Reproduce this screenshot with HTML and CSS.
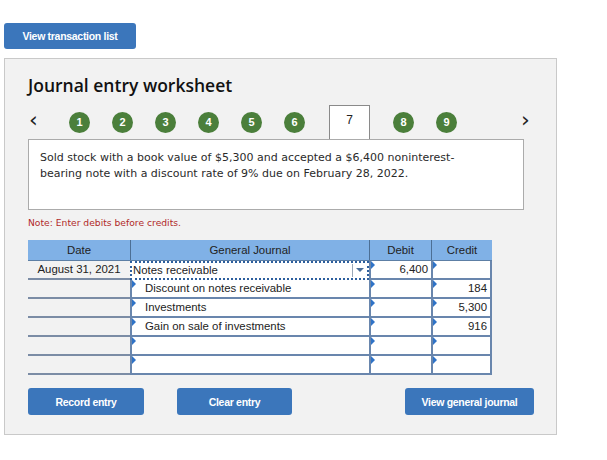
FILE: index.html
```html
<!DOCTYPE html>
<html lang="en">
<head>
    <meta charset="UTF-8">
    <title>Journal entry worksheet</title>
    <link rel="stylesheet" href="styles.css">
</head>
<body>
<div class="page">
    <button class="btn btn-top">View transaction list</button>

    <div class="panel">
        <h2 class="title">Journal entry worksheet</h2>

        <div class="nav">
            <span class="arrow">&lsaquo;</span>
            <span class="slot"><span class="dot">1</span></span>
            <span class="slot"><span class="dot">2</span></span>
            <span class="slot"><span class="dot">3</span></span>
            <span class="slot"><span class="dot">4</span></span>
            <span class="slot"><span class="dot">5</span></span>
            <span class="slot"><span class="dot">6</span></span>
            <span class="current">7</span>
            <span class="slot"><span class="dot">8</span></span>
            <span class="slot"><span class="dot">9</span></span>
            <span class="arrow arrow-right">&rsaquo;</span>
        </div>

        <div class="scenario">
            Sold stock with a book value of $5,300 and accepted a $6,400 noninterest-<br>
            bearing note with a discount rate of 9% due on February 28, 2022.
        </div>

        <p class="note">Note: Enter debits before credits.</p>

        <div class="journal">
            <div class="jrow head">
                <div class="hcell">Date</div>
                <div class="hcell">General Journal</div>
                <div class="hcell">Debit</div>
                <div class="hcell">Credit</div>
            </div>
            <div class="jrow">
                <div class="date">August 31, 2021</div>
                <div class="cell account selected">Notes receivable<span class="drop"></span></div>
                <div class="cell amt mark">6,400</div>
                <div class="cell amt mark last"></div>
            </div>
            <div class="jrow">
                <div class="date"></div>
                <div class="cell account mark indent">Discount on notes receivable</div>
                <div class="cell amt mark"></div>
                <div class="cell amt mark last">184</div>
            </div>
            <div class="jrow">
                <div class="date"></div>
                <div class="cell account mark indent">Investments</div>
                <div class="cell amt mark"></div>
                <div class="cell amt mark last">5,300</div>
            </div>
            <div class="jrow">
                <div class="date"></div>
                <div class="cell account mark indent">Gain on sale of investments</div>
                <div class="cell amt mark"></div>
                <div class="cell amt mark last">916</div>
            </div>
            <div class="jrow">
                <div class="date"></div>
                <div class="cell account mark"></div>
                <div class="cell amt mark"></div>
                <div class="cell amt mark last"></div>
            </div>
            <div class="jrow">
                <div class="date"></div>
                <div class="cell account mark"></div>
                <div class="cell amt mark"></div>
                <div class="cell amt mark last"></div>
            </div>
        </div>

        <div class="actions">
            <button class="btn btn-record">Record entry</button>
            <button class="btn btn-clear">Clear entry</button>
            <button class="btn btn-view">View general journal</button>
        </div>
    </div>
</div>
</body>
</html>
```

FILE: styles.css
```css
body {
    margin: 0;
    background: #ffffff;
    font-family: "Liberation Sans", Arial, sans-serif;
}

.page {
    padding: 23px 0 0 4px;
}

.btn {
    display: block;
    height: 27px;
    border: 0;
    border-radius: 3px;
    background-color: #3b76bb;
    color: #ffffff;
    font-family: "Liberation Sans", Arial, sans-serif;
    font-weight: bold;
    font-size: 10.5px;
    letter-spacing: -0.3px;
    padding: 0;
}

.btn-top {
    width: 132px;
    height: 26px;
}

.panel {
    box-sizing: border-box;
    margin-top: 9px;
    width: 553px;
    height: 377px;
    border: 1px solid #c9c9c9;
    background: #f2f2f2;
    padding-left: 23px;
}

.title {
    margin: 15px 0 0 0;
    font-family: "Open Sans", sans-serif;
    font-weight: 600;
    font-size: 17.5px;
    line-height: 22px;
    color: #111111;
}

.nav {
    display: flex;
    align-items: center;
    height: 34px;
    margin-top: 9px;
}

.arrow {
    width: 29px;
    font-family: "DejaVu Sans", sans-serif;
    font-size: 22px;
    line-height: 20px;
    color: #222222;
    padding-left: 1px;
    margin-top: -4px;
}

.arrow-right {
    margin-left: 52px;
}

.slot {
    width: 43px;
    display: flex;
    justify-content: center;
}

.dot {
    width: 21px;
    height: 21px;
    border-radius: 50%;
    background: #4b7f3b;
    color: #ffffff;
    font-weight: bold;
    font-size: 11px;
    line-height: 21px;
    text-align: center;
}

.current {
    box-sizing: border-box;
    width: 41px;
    height: 34px;
    margin: 0 12px 0 13px;
    border: 1px solid #8a8a8a;
    border-bottom: 0;
    background: #ffffff;
    font-size: 12px;
    line-height: 28px;
    text-align: center;
    color: #222222;
    align-self: flex-end;
}

.scenario {
    box-sizing: border-box;
    width: 496px;
    height: 71px;
    border: 1px solid #ababab;
    background: #ffffff;
    padding: 10px 11px 0 11px;
    font-family: "DejaVu Sans", Verdana, sans-serif;
    font-size: 11px;
    line-height: 16px;
    color: #2a2a2a;
}

.note {
    margin: 6px 0 0 0;
    font-family: "DejaVu Sans", Verdana, sans-serif;
    font-size: 9.2px;
    line-height: 13px;
    color: #b12a2a;
}

.journal {
    margin-top: 11px;
    width: 464px;
    font-size: 11.4px;
    color: #222222;
}

.jrow {
    display: grid;
    grid-template-columns: 102px 239px 62px 61px;
    height: 19px;
}

.jrow.head {
    height: 21px;
    background: #80b1e6;
    border-bottom: 1px solid #5d7fa5;
    box-sizing: border-box;
}

.hcell {
    text-align: center;
    line-height: 20px;
    border-left: 1px solid #4c6f95;
}

.hcell:first-child {
    border-left: 0;
}

.date {
    text-align: center;
    line-height: 17px;
    border-bottom: 2px solid #7b8ca5;
}

.cell {
    position: relative;
    box-sizing: border-box;
    background: #ffffff;
    border-left: 2px solid #6986ad;
    border-bottom: 2px solid #6986ad;
    line-height: 17px;
}

.cell.last {
    border-right: 2px solid #6986ad;
}

.account {
    padding-left: 1px;
}

.account.indent {
    padding-left: 13px;
}

.amt {
    text-align: right;
    padding-right: 3px;
}

.mark::before {
    content: "";
    position: absolute;
    left: 0;
    top: 0;
    border-top: 4px solid transparent;
    border-bottom: 4px solid transparent;
    border-left: 4px solid #2f73c7;
}

.selected {
    border: 2px dotted #2d5f9e;
    border-top-width: 2px;
    line-height: 15px;
}

.drop {
    position: absolute;
    right: 0;
    top: 1px;
    width: 14px;
    height: 13px;
    border-left: 1px solid #9aa8b8;
}

.drop::after {
    content: "";
    position: absolute;
    left: 3px;
    top: 4px;
    border-left: 4px solid transparent;
    border-right: 4px solid transparent;
    border-top: 4px solid #4b6f9a;
}

.actions {
    display: flex;
    margin-top: 13px;
}

.btn-record {
    width: 116px;
}

.btn-clear {
    width: 115px;
    margin-left: 33px;
}

.btn-view {
    width: 129px;
    margin-left: 113px;
}
```
